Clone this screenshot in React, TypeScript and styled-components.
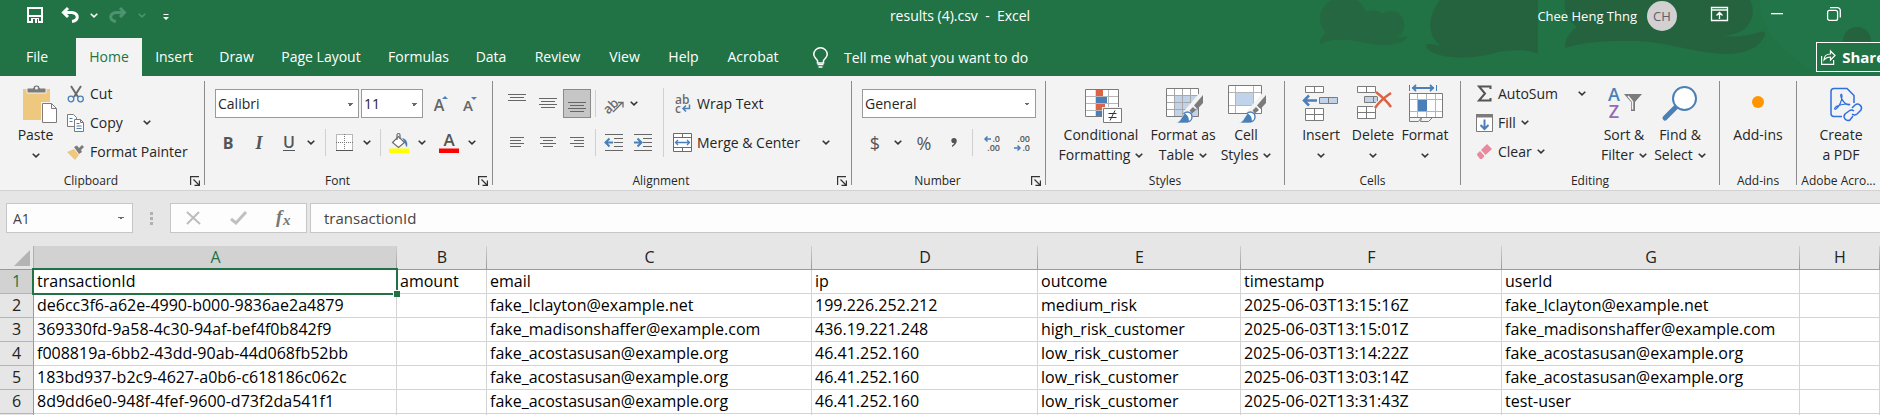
import React from "react";
import styled, { createGlobalStyle, css } from "styled-components";

const uiFont = `"Open Sans", "Noto Sans", sans-serif`;
const cellFont = `"Open Sans", "Noto Sans", sans-serif`;
const green = "#217346";
const blue = "#4a7fb8";
const gray = "#6b6b6b";

const GlobalStyle = createGlobalStyle`
  *, *::before, *::after { box-sizing: border-box; }
  body { margin: 0; background: #e6e6e6; font-family: ${uiFont}; color: #262626; }
  button, input, select { font: inherit; color: inherit; margin: 0; }
  svg { display: block; flex: none; overflow: visible; }
`;

const Page = styled.div`
  height: 100vh;
  display: flex;
  flex-direction: column;
  overflow: hidden;
`;

/* ---------- title bar and tabs ---------- */

const Header = styled.header`
  position: relative;
  flex: none;
  background: ${green};
  color: #fff;
  overflow: hidden;
`;

const Backdrop = styled.svg`
  position: absolute;
  top: 0;
  right: 0;
`;

const TitleBar = styled.div`
  position: relative;
  display: grid;
  grid-template-columns: 40px minmax(0, 1fr) auto minmax(0, 1fr);
  align-items: start;
  height: 38px;
`;

const QuickAccess = styled.div`
  grid-column: 1 / 3;
  display: flex;
  padding-left: 20px;
`;

const BarButton = styled.button<{ $w: number; $h?: number }>`
  width: ${(p) => p.$w}px;
  height: ${(p) => p.$h ?? 30}px;
  display: flex;
  align-items: center;
  justify-content: center;
  flex: none;
  padding: 0;
  border: 0;
  background: none;
  &:disabled { color: #4f9270; }
`;

const DocTitle = styled.h1`
  margin: 0;
  font-size: 14px;
  font-weight: 400;
  line-height: 32px;
  white-space: pre;
`;

const TitleRight = styled.div`
  display: flex;
  justify-content: flex-end;
  padding-right: 26px;
`;

const Account = styled.button`
  display: flex;
  align-items: center;
  gap: 10px;
  height: 32px;
  margin-right: 21px;
  padding: 0;
  border: 0;
  background: none;
  font-size: 13px;
  white-space: nowrap;
`;

const Avatar = styled.span`
  width: 30px;
  height: 30px;
  border-radius: 50%;
  background: #d2d0d0;
  color: #5f5f68;
  font-size: 13px;
  line-height: 30px;
  text-align: center;
`;

const TabRow = styled.nav`
  position: relative;
  display: flex;
  height: 38px;
`;

const Tab = styled.button<{ $w: number; $active?: boolean }>`
  width: ${(p) => p.$w}px;
  flex: none;
  padding: 0;
  border: 0;
  background: none;
  font-size: 14px;
  line-height: 38px;
  white-space: nowrap;
  ${(p) => p.$active && css`
    background: #f3f3f3;
    color: ${green};
  `}
`;

const FileTab = styled(Tab)`
  padding-right: 2px;
`;

const TellMe = styled.button`
  display: flex;
  align-items: center;
  gap: 16px;
  padding: 0 20px;
  border: 0;
  background: none;
  font-size: 14px;
  white-space: nowrap;
`;

const ShareButton = styled.button`
  display: flex;
  align-items: center;
  gap: 6px;
  height: 30px;
  margin: 4px -14px 0 auto;
  padding: 0 8px 0 4px;
  border: 1px solid #fff;
  background: ${green};
  font-size: 15px;
  font-weight: 700;
`;

/* ---------- ribbon ---------- */

const Ribbon = styled.div`
  display: flex;
  flex: none;
  height: 115px;
  padding-top: 3px;
  background: #f3f3f3;
  border-bottom: 1px solid #d2d2d2;
  overflow: hidden;
`;

const Group = styled.section<{ $w: number }>`
  width: ${(p) => p.$w}px;
  flex: none;
  display: flex;
  flex-direction: column;
`;

const LastGroup = styled.section`
  flex: 1;
  min-width: 83px;
  display: flex;
  flex-direction: column;
`;

const Divider = styled.div`
  width: 1px;
  height: 104px;
  margin-top: 2px;
  flex: none;
  background: #8c8c8c;
`;

const GroupBody = styled.div<{ $left?: number }>`
  display: flex;
  height: 94px;
  padding-left: ${(p) => p.$left ?? 0}px;
`;

const GroupFooter = styled.div`
  display: flex;
  align-items: center;
  height: 16px;
`;

const GroupName = styled.span`
  flex: 1;
  font-size: 12px;
  line-height: 16px;
  text-align: center;
  white-space: nowrap;
`;

const Launcher = styled.button`
  width: 22px;
  height: 16px;
  padding: 0 0 0 8px;
  border: 0;
  background: none;
`;

const BigButton = styled.button<{ $w: number }>`
  width: ${(p) => p.$w}px;
  flex: none;
  display: flex;
  flex-direction: column;
  align-items: center;
  padding: 6px 0 0;
  border: 0;
  background: none;
  font-size: 14px;
  line-height: 20px;
  white-space: nowrap;
`;

const BigIcon = styled.svg.attrs({ width: 40, height: 40, viewBox: "0 0 40 40", fill: "none" })``;

const BigLine = styled.span`
  display: flex;
  align-items: center;
  justify-content: center;
  gap: 5px;
  height: 20px;
`;

const SmallStack = styled.div<{ $w?: number }>`
  display: flex;
  flex-direction: column;
  flex: none;
  width: ${(p) => (p.$w ? `${p.$w}px` : "auto")};
`;

const SmallRow = styled.div`
  display: flex;
  align-items: center;
  height: 29px;
`;

const SmallButton = styled.button`
  display: flex;
  align-items: center;
  gap: 5px;
  height: 28px;
  padding: 0 0 0 4px;
  border: 0;
  background: none;
  font-size: 14px;
  white-space: nowrap;
`;

const ToolRows = styled.div`
  display: flex;
  flex-direction: column;
  gap: 10px;
  padding-top: 10px;
`;

const ToolRow = styled.div`
  display: flex;
  align-items: center;
  height: 29px;
`;

const Tool = styled.button<{ $w: number; $on?: boolean }>`
  width: ${(p) => p.$w}px;
  height: 29px;
  flex: none;
  display: flex;
  align-items: center;
  justify-content: center;
  padding: 0;
  border: ${(p) => (p.$on ? "1px solid #8a8a8a" : "0")};
  background: ${(p) => (p.$on ? "#c6c6c6" : "none")};
  font-size: 16px;
  line-height: 20px;
  color: #555;
`;

const Glyph = styled.span<{ $kind: "bold" | "italic" | "underline" | "symbol" }>`
  ${(p) => p.$kind === "bold" && css`font-weight: 700;`}
  ${(p) => p.$kind === "italic" && css`font-family: "Liberation Serif", serif; font-size: 18px; font-style: italic; font-weight: 700;`}
  ${(p) => p.$kind === "underline" && css`font-weight: 600; border-bottom: 1px solid #555; line-height: 16px;`}
  ${(p) => p.$kind === "symbol" && css`font-size: 18px;`}
`;

const Rule = styled.div<{ $h?: number; $gap?: number }>`
  width: 1px;
  height: ${(p) => p.$h ?? 27}px;
  margin: 0 ${(p) => p.$gap ?? 4}px;
  flex: none;
  background: #d0d0d0;
`;

const TallRule = styled(Rule)`
  margin-top: 9px;
`;

const caret = css`
  appearance: none;
  background-image: linear-gradient(45deg, transparent 50%, #6b6b6b 50%), linear-gradient(-45deg, transparent 50%, #6b6b6b 50%);
  background-image: linear-gradient(to bottom left, #6b6b6b 50%, transparent 50%), linear-gradient(to bottom right, #6b6b6b 50%, transparent 50%);
  background-size: 3px 3px;
  background-repeat: no-repeat;
`;

const Combo = styled.select<{ $w: number }>`
  ${caret}
  width: ${(p) => p.$w}px;
  height: 29px;
  padding: 0 20px 0 2px;
  border: 1px solid #9a9a9a;
  border-radius: 0;
  background-color: #fff;
  background-position: right 8px top 13px, right 5px top 13px;
  font-size: 14px;
  flex: none;
`;

const SizeCombo = styled(Combo)`
  margin-left: 2px;
`;

/* ---------- formula bar ---------- */

const FormulaBar = styled.div`
  display: flex;
  flex: none;
  height: 55px;
  padding: 12px 0 12px 6px;
`;

const NameBox = styled.select`
  ${caret}
  width: 127px;
  height: 30px;
  padding: 0 24px 0 6px;
  border: 1px solid #c6c6c6;
  border-radius: 0;
  background-color: #fdfdfd;
  background-image: linear-gradient(to top right, transparent 50%, #6b6b6b 50%), linear-gradient(to top left, transparent 50%, #6b6b6b 50%);
  background-position: right 11px top 13px, right 8px top 13px;
  font-size: 14px;
  color: #444;
`;

const Grip = styled.div`
  width: 37px;
  height: 30px;
  display: flex;
  flex-direction: column;
  align-items: center;
  justify-content: center;
  gap: 2px;
`;

const GripDot = styled.span`
  width: 3px;
  height: 3px;
  background: #b0b0b0;
`;

const FormulaTools = styled.div`
  display: flex;
  justify-content: space-around;
  width: 137px;
  height: 30px;
  margin-right: 3px;
  border: 1px solid #c6c6c6;
  background: #fdfdfd;
`;

const FormulaInput = styled.input`
  flex: 1;
  min-width: 0;
  height: 30px;
  padding: 0 13px;
  border: 1px solid #c6c6c6;
  border-right: 0;
  border-radius: 0;
  background: #fdfdfd;
  font-size: 15px;
  color: #444;
`;

/* ---------- worksheet ---------- */

const Sheet = styled.table`
  table-layout: fixed;
  width: 100%;
  min-width: 1880px;
  border-collapse: separate;
  border-spacing: 0;
  background: #fff;
  font-family: ${cellFont};
  font-size: 16px;
  color: #000;
`;

const Col = styled.col<{ $w?: number }>`
  width: ${(p) => (p.$w ? `${p.$w}px` : "auto")};
`;

const ColHead = styled.th<{ $on?: boolean }>`
  height: 24px;
  padding: 0;
  font-weight: 400;
  line-height: 23px;
  border-bottom: 1px solid #999;
  background: linear-gradient(#d0d0d0, #999) right / 1px 100% no-repeat ${(p) => (p.$on ? "#d2d2d2" : "#e6e6e6")};
  color: ${(p) => (p.$on ? green : "#222")};
`;

const Corner = styled.td`
  padding: 0 3px 3px 14px;
  border-right: 1px solid #b0b0b0;
  border-bottom: 1px solid #999;
  background: #e6e6e6;
  vertical-align: bottom;
`;

const RowHead = styled.th<{ $on?: boolean }>`
  height: 24px;
  padding: 0;
  font-weight: 400;
  line-height: 23px;
  border-right: 1px solid #999;
  border-bottom: 1px solid #b5b5b5;
  background: ${(p) => (p.$on ? "#d2d2d2" : "#e6e6e6")};
  color: ${(p) => (p.$on ? green : "#222")};
`;

const Cell = styled.td<{ $selected?: boolean }>`
  position: relative;
  height: 24px;
  padding: 0 0 0 3px;
  line-height: 23px;
  white-space: nowrap;
  border-right: 1px solid #d4d4d4;
  border-bottom: 1px solid #d4d4d4;
  ${(p) => p.$selected && css`
    z-index: 1;
    &::before {
      content: "";
      position: absolute;
      inset: -2px;
      border: 2px solid ${green};
    }
    &::after {
      content: "";
      position: absolute;
      right: -4px;
      bottom: -4px;
      width: 7px;
      height: 7px;
      background: ${green};
      border: solid #fff;
      border-width: 1px 0 0 1px;
    }
  `}
`;

/* ---------- icons ---------- */

const Chevron = ({ color = "#333" }: { color?: string }) => (
  <svg width="8" height="5" viewBox="0 0 8 5" fill="none" stroke={color} strokeWidth="1.5">
    <path d="M.7.7 4 3.9 7.3.7" />
  </svg>
);

const LaunchIcon = () => (
  <svg width="11" height="11" viewBox="0 0 11 11" fill="none" stroke="#333" strokeWidth="1.2">
    <path d="M.6 9V.6H9M3.5 3.5 9 9M9.4 4.5v4.9H4.5" />
  </svg>
);

const lineSets: Record<string, number[][]> = {
  top: [[0, 18, 0], [2, 16, 3], [0, 18, 6]],
  middle: [[0, 18, 0], [2, 16, 3], [0, 18, 6], [2, 16, 9]],
  bottom: [[0, 18, 0], [2, 16, 3], [0, 18, 6], [2, 16, 9]],
  left: [[0, 14, 0], [0, 11, 3], [0, 14, 6], [0, 11, 9]],
  center: [[0, 16, 0], [3, 13, 3], [0, 16, 6], [3, 13, 9]],
  right: [[0, 14, 0], [4, 14, 3], [0, 14, 6], [4, 14, 9]],
};

const LinesIcon = ({ kind }: { kind: string }) => {
  const lines = lineSets[kind];
  const width = Math.max(...lines.map((l) => l[1]));
  const shift = kind === "top" ? -4 : kind === "bottom" ? 4 : 0;
  return (
    <svg width={width} height="11" viewBox={`0 0 ${width} 11`} stroke="#666" strokeWidth="1">
      {lines.map(([a, b, y]) => (
        <path key={y} d={`M${a} ${y + 0.5 + shift}H${b}`} />
      ))}
    </svg>
  );
};

const IndentIcon = ({ out }: { out?: boolean }) => (
  <svg width="18" height="17" viewBox="0 0 18 17" fill="none" stroke="#666">
    <path d="M0 .5h18M9 4.5h9M9 8.5h9M9 12.5h9M0 16.5h18" />
    <path d={out ? "M8 8.5H1.5M4.5 4.5l-4 4 4 4" : "M0 8.5h6.5M3.5 4.5l4 4-4 4"} stroke={blue} strokeWidth="2" />
  </svg>
);

const Brush = () => (
  <g>
    <path d="M40 10 31 20.500 34.500 24 40 18z" fill="#7b7b7b" />
    <path d="M30 22l3 3-4 3.500-2.500-3z" fill="#7b7b7b" />
    <path d="M13 38c6-1 5-10 12-10 7 1 5 10-2 10z" fill={blue} stroke="#f3f3f3" strokeWidth=".6" />
    <path d="M21 28.500c3-3 8-1 8 3 0 3-2 5-4 5 1-4-1-6-4-8z" fill="#fff" stroke={blue} strokeWidth="1.300" />
  </g>
);

const PasteIcon = () => (
  <BigIcon>
    <path d="M7 4h27v31H7z" fill="#edc87e" />
    <path d="M11 8V3h6c0-4 7-4 7 0h6v5z" fill="#7b7b7b" stroke="#f3f3f3" />
    <circle cx="20.500" cy="3" r="1.500" fill="#f3f3f3" />
    <path d="M26.500 18.500h9l5 5v14h-14z" fill="#fff" stroke="#f3f3f3" strokeWidth="3" />
    <path d="M26.500 18.500h9l5 5v14h-14zM35.500 18.500v5h5" fill="#fff" stroke="#7b7b7b" />
  </BigIcon>
);

const ConditionalIcon = () => (
  <BigIcon>
    <path d="M4.500 4.500h33v27h-33z" fill="#fff" />
    <path d="M15 11.500h12.500M4.500 11.500h33M4.500 18.500h33M4.500 25.500h33M15 4.500v27M27.500 4.500v27" stroke="#b5b5b5" />
    <path d="M15 5h7v6h-7zM15 19h9v6h-9z" fill="#dc6344" />
    <path d="M15 12h11v6H15zM15 26h7v6h-7z" fill={blue} />
    <path d="M4.500 4.500h33v27h-33z" stroke="#7b7b7b" />
    <path d="M22.500 23.500h18v14h-18z" fill="#fff" stroke="#f3f3f3" strokeWidth="3" />
    <path d="M22.500 23.500h18v14h-18z" fill="#fff" stroke="#7b7b7b" />
    <path d="M27.500 28.500h8M27.500 32.500h8M34 25.500l-5 10" stroke="#333" />
  </BigIcon>
);

const FormatTableIcon = () => (
  <BigIcon>
    <path d="M3.500 3.500h32v28h-32z" fill="#fff" />
    <path d="M11.500 10.500h24v21h-24z" fill="#c0d3ea" />
    <path d="M3.500 10.500h32M3.500 17.500h32M3.500 24.500h32M11.500 3.500v28M19.500 3.500v28M27.500 3.500v28" stroke="#a8a8a8" />
    <path d="M3.500 3.500h32v28h-32z" stroke="#7b7b7b" />
    <path d="M41 8 23 29" stroke="#f3f3f3" strokeWidth="7" />
    <Brush />
  </BigIcon>
);

const CellStylesIcon = () => (
  <BigIcon>
    <path d="M2.500.5h33v28h-33z" fill="#fff" />
    <path d="M10 8h17v12H10z" fill="#c0d3ea" />
    <path d="M2.500 7.500h33M2.500 20.500h33M9.500.5v28M27.500.5v28" stroke="#b5b5b5" />
    <path d="M2.500.5h33v28h-33z" stroke="#7b7b7b" />
    <path d="M41 8 23 29" stroke="#f3f3f3" strokeWidth="7" />
    <Brush />
  </BigIcon>
);

const InsertIcon = () => (
  <BigIcon>
    <path d="M4.500 1.500h18v6h-18zM13.500 1.500v6M4.500 23.500h18v12h-18zM13.500 23.500v12M4.500 29.500h18" fill="#fff" stroke="#7b7b7b" />
    <path d="M18.500 12.500h18v6h-18zM27.500 12.500v6" fill="#c0d3ea" stroke="#7b7b7b" />
    <path d="M16 15.500H3M8 10.500l-5 5 5 5" stroke={blue} strokeWidth="2.500" />
  </BigIcon>
);

const DeleteIcon = () => (
  <BigIcon>
    <path d="M4.500 1.500h18v6h-18zM13.500 1.500v6M4.500 21.500h18v12h-18zM13.500 21.500v12M4.500 27.500h18" fill="#fff" stroke="#7b7b7b" />
    <path d="M11.500 11.500h13v6h-13zM20.500 11.500v6" fill="#c0d3ea" stroke="#7b7b7b" />
    <path d="M23 7c5 4 11 9 15 15M38 8c-6 4-12 9-16 15" stroke="#f3f3f3" strokeWidth="5" />
    <path d="M23 7c5 4 11 9 15 15M38 8c-6 4-12 9-16 15" stroke="#dc6344" strokeWidth="2.500" />
  </BigIcon>
);

const FormatIcon = () => (
  <BigIcon>
    <path d="M4.500 0v6M31.500 0v6" stroke={blue} />
    <path d="M7 3h22M11 0 8 3l3 3M25 0l3 3-3 3" stroke={blue} strokeWidth="1.800" />
    <path d="M4.500 8.500h33v24h-33z" fill="#fff" />
    <path d="M4.500 14.500h33M4.500 26.500h33M12.500 8.500v24M21.500 8.500v24M30.500 8.500v24" stroke="#b5b5b5" />
    <path d="M13 15h9v11h-9z" fill={blue} />
    <path d="M4.500 8.500h33v24h-33zM4.500 32.500v4h9l3-4M16.500 32.500l-1 4h8l4-4" stroke="#7b7b7b" />
  </BigIcon>
);

const SortIcon = () => (
  <BigIcon fontFamily={uiFont} fontSize="18" fontWeight="600">
    <text x="10" y="16" fill={blue} textAnchor="middle">A</text>
    <text x="10" y="33" fill="#9668b8" textAnchor="middle">Z</text>
    <path d="M20 9h18l-7 8v9h-4v-9z" fill="#7b7b7b" />
    <path d="M24 11l4.500 5.500v8" stroke="#f3f3f3" strokeWidth="1.500" />
  </BigIcon>
);

const FindIcon = () => (
  <BigIcon>
    <path d="M5 33 16 22" stroke={blue} strokeWidth="5" strokeLinecap="round" />
    <circle cx="24.500" cy="13.500" r="11.500" fill="#fff" stroke={blue} strokeWidth="2" />
  </BigIcon>
);

const PdfIcon = () => (
  <BigIcon stroke="#2f6fe0" strokeWidth="1.500">
    <path d="M21 31.500H13a3 3 0 0 1-3-3V6.500a3 3 0 0 1 3-3h13l7 7V18" />
    <path d="M15 24c3-2 6-8 6-13 0-3-2-2-1 1 1 4 5 8 8 8 3-1-4-2-12 1-3 2-3 4-1 3z" strokeWidth="1.200" />
    <path d="m31 23 3-3a4 4 0 0 1 6 5l-4 4a4 4 0 0 1-5 0M32 31l-3 4a4 4 0 0 1-5-6l4-3a4 4 0 0 1 5 0" />
  </BigIcon>
);

const CutIcon = () => (
  <svg width="18" height="18" viewBox="0 0 18 18" fill="none">
    <path d="M4 1l7 11M14 1 7 12" stroke={gray} strokeWidth="2" />
    <circle cx="4" cy="14" r="2.800" stroke={blue} strokeWidth="1.300" />
    <circle cx="13.500" cy="14" r="2.800" stroke={blue} strokeWidth="1.300" />
  </svg>
);

const CopyIcon = () => (
  <svg width="18" height="18" viewBox="0 0 18 18" fill="#fff" stroke="#7b7b7b">
    <path d="M.5.500h6l3 3v9h-9z" />
    <path d="M7.500 5.500h6l3 3v9h-9zM13.500 5.500v3h3" />
    <path d="M2.500 4.500h3M2.500 7.500h3M9.500 9.500h3M9.500 12h5M9.500 14.500h5" stroke={blue} />
  </svg>
);

const PainterIcon = () => (
  <svg width="18" height="16" viewBox="0 0 18 16">
    <path d="M0 8 7 5l5 6-4 5z" fill="#edc87e" />
    <path d="M7 3l3-1.500L12 4l3-3 2 2-3 3 1 2-3 2z" fill="#7b7b7b" />
  </svg>
);

const BorderIcon = () => (
  <svg width="17" height="17" viewBox="0 0 17 17" stroke="#777" fill="#fff">
    <path d="M.5.500h16v16H.500z" strokeDasharray="1 1" />
    <path d="M8.500 0v17M0 8.500h17" strokeDasharray="1 1" />
    <path d="M0 16.500h17" stroke="#555" />
  </svg>
);

const FillIcon = () => (
  <svg width="20" height="20" viewBox="0 0 20 20" fill="none">
    <path d="M3.500 9.500 9.500 3.500l6 6-6 5z" fill="#fff" stroke={gray} strokeWidth="1.200" />
    <path d="M8 7V2c0-2 3-2 3 0v4" stroke={gray} strokeWidth="1.200" />
    <path d="M13 5c5 1 6 5 5 9-2-1-1-4-5-9z" fill={blue} />
    <path d="M0 15.500h20V20H0z" fill="#ff0" />
  </svg>
);

const FontColorIcon = () => (
  <svg width="20" height="20" viewBox="0 0 20 20">
    <text x="10" y="13" fontFamily={uiFont} fontSize="17" fontWeight="600" fill="#555" textAnchor="middle">A</text>
    <path d="M0 15.500h20V20H0z" fill="#f00" />
  </svg>
);

const FontSizeIcon = ({ grow }: { grow?: boolean }) => (
  <svg width="16" height="18" viewBox="0 0 16 18">
    <text x="6" y="16" fontFamily={uiFont} fontSize={grow ? 16 : 15} fontWeight="600" fill="#666" textAnchor="middle">A</text>
    <path d={grow ? "M9 4h6l-3-3z" : "M9 2h6l-3 3z"} fill={blue} />
  </svg>
);

const OrientationIcon = () => (
  <svg width="19" height="18" viewBox="0 0 19 18" fill="none" stroke={gray} strokeWidth="1.300">
    <text x="-2" y="17" transform="rotate(-45 4 12)" fontFamily={uiFont} fontSize="13" fontWeight="600" fill={gray} stroke="none">ab</text>
    <path d="M8 17 17.500 7.500M13 7.500h5v5" />
  </svg>
);

const WrapIcon = () => (
  <svg width="19" height="20" viewBox="0 0 19 20" fill="none">
    <g fontFamily={uiFont} fontSize="12" fontWeight="600" fill={gray}>
      <text x="2" y="10">ab</text>
      <text x="2" y="19">c</text>
    </g>
    <path d="M16.500 10.500v4H10M13 11.500l-3 3 3 3" stroke={blue} strokeWidth="1.500" />
  </svg>
);

const MergeIcon = () => (
  <svg width="19" height="19" viewBox="0 0 19 19" fill="#fff" stroke={gray}>
    <path d="M.5.500h18v18H.500zM.500 4.500h18M.500 14.500h18M9.500.500v4M9.500 14.500v4" />
    <path d="M2.500 9.500h14M5 7 2.500 9.500 5 12M14 7l2.500 2.500L14 12" fill="none" stroke={blue} strokeWidth="1.300" />
  </svg>
);

const DecimalIcon = ({ more }: { more?: boolean }) => (
  <svg width="16" height="18" viewBox="0 0 16 18" fill="none">
    <g fontFamily={uiFont} fontSize="9" fontWeight="600" fill="#555" textAnchor="end">
      <text x="16" y="8">{more ? ".0" : ".00"}</text>
      <text x="16" y="17">{more ? ".00" : ".0"}</text>
    </g>
    <path d={more ? "M7 5H1M3.500 2.500 1 5l2.500 2.500" : "M0 14h6M3.500 11.500 6 14l-2.500 2.500"} stroke={blue} strokeWidth="1.500" />
  </svg>
);

const SigmaIcon = () => (
  <svg width="17" height="17" viewBox="0 0 17 17" fill="none" stroke="#555" strokeWidth="2">
    <path d="M14.500 4V1.500H3L9 8.500 3 15.500h11.500V13" />
  </svg>
);

const FillDownIcon = () => (
  <svg width="17" height="18" viewBox="0 0 17 18" fill="none">
    <path d="M.5.500h16v17H.500z" fill="#fff" stroke="#7b7b7b" />
    <path d="M0 0h17v3.500H0z" fill="#7b7b7b" />
    <path d="M8.500 5.500v9M4.500 11l4 4 4-4" stroke={blue} strokeWidth="2" />
  </svg>
);

const EraserIcon = () => (
  <svg width="17" height="17" viewBox="0 0 17 17">
    <path d="M11 1 16 6 9.500 12 5 7z" fill="#e88a9c" />
    <path d="m4 8 4.500 5L6 16H4L1 12v-1z" fill="#e88a9c" />
  </svg>
);

/* ---------- data ---------- */

const tabs: [string, number][] = [
  ["Insert", 64],
  ["Draw", 61],
  ["Page Layout", 108],
  ["Formulas", 87],
  ["Data", 58],
  ["Review", 75],
  ["View", 59],
  ["Help", 59],
  ["Acrobat", 80],
];

const columns: [string, number?][] = [
  ["A", 363],
  ["B", 90],
  ["C", 325],
  ["D", 226],
  ["E", 203],
  ["F", 261],
  ["G", 298],
  ["H"],
];

const rows: string[][] = [
  ["transactionId", "amount", "email", "ip", "outcome", "timestamp", "userId", ""],
  ["de6cc3f6-a62e-4990-b000-9836ae2a4879", "", "fake_lclayton@example.net", "199.226.252.212", "medium_risk", "2025-06-03T13:15:16Z", "fake_lclayton@example.net", ""],
  ["369330fd-9a58-4c30-94af-bef4f0b842f9", "", "fake_madisonshaffer@example.com", "436.19.221.248", "high_risk_customer", "2025-06-03T13:15:01Z", "fake_madisonshaffer@example.com", ""],
  ["f008819a-6bb2-43dd-90ab-44d068fb52bb", "", "fake_acostasusan@example.org", "46.41.252.160", "low_risk_customer", "2025-06-03T13:14:22Z", "fake_acostasusan@example.org", ""],
  ["183bd937-b2c9-4627-a0b6-c618186c062c", "", "fake_acostasusan@example.org", "46.41.252.160", "low_risk_customer", "2025-06-03T13:03:14Z", "fake_acostasusan@example.org", ""],
  ["8d9dd6e0-948f-4fef-9600-d73f2da541f1", "", "fake_acostasusan@example.org", "46.41.252.160", "low_risk_customer", "2025-06-02T13:31:43Z", "test-user", ""],
];

/* ---------- parts ---------- */

const Footer = ({ name, launcher }: { name: string; launcher?: boolean }) => (
  <GroupFooter>
    <GroupName>{name}</GroupName>
    {launcher && (
      <Launcher aria-label={`${name} settings`}>
        <LaunchIcon />
      </Launcher>
    )}
  </GroupFooter>
);

const Big = ({ w, icon, first, second, menu }: { w: number; icon: React.ReactNode; first: string; second?: string; menu?: boolean }) => (
  <BigButton $w={w}>
    {icon}
    <BigLine>{first}</BigLine>
    <BigLine>
      {second}
      {menu && <Chevron />}
    </BigLine>
  </BigButton>
);

const TitleArea = () => (
  <Header>
    <Backdrop width="610" height="76" viewBox="1270 0 610 76" fill="#25633f" aria-hidden="true">
      <path d="M1760 0h120v76h-60c-30-20-60-40-60-76z" fill="#227849" opacity=".5" />
      <path d="M1332 0h24c7 4 8 8 10 12 8-3 12-2 16 2 14-8 24 2 22 14-1 6-4 8-8 9 4 1 8 0 12-1-4 8-20 11-36 8-20-4-36-8-52 0 0-5 2-9 6-11-9-10-8-25 6-33z" opacity=".75" />
      <path d="M1440 0h98v54c-10-5-24-4-40-2-20 7-54 8-68-1-5-4-6-7 0-7 4 0 7 1 10 2-14-13-12-30 0-46z" />
      <path d="M1565 48c0-9 4-16 12-21-10-7-14-17-12-27h185c4 8 5 18-4 28-6 5-14 7-22 8 16 2 28-2 36-4 6-2 6 2 3 7-8 13-28 17-50 14-30-3-50-13-90-12-25 0-42 2-58 7z" />
      <circle cx="1857" cy="41" r="14" />
    </Backdrop>
    <TitleBar>
      <QuickAccess>
        <BarButton $w={30} aria-label="Save">
          <svg width="16" height="16" viewBox="0 0 16 16" fill="none" stroke="#fff" strokeWidth="2">
            <path d="M1 1h14v14H1zM2 9h12" />
            <path d="M4 11h8v5H4z" fill="#fff" stroke="none" />
            <path d="M6 12h2v4H6zM10 12h1v4h-1z" fill={green} stroke="none" />
          </svg>
        </BarButton>
        <BarButton $w={40} aria-label="Undo">
          <svg width="18" height="16" viewBox="0 0 18 16" fill="none" stroke="#fff" strokeWidth="3">
            <path d="M7 1 2.500 5.500 7 10M3 5.500h8c7 1 7 8 0 9" />
          </svg>
        </BarButton>
        <BarButton $w={8} aria-label="Undo history"><Chevron color="#fff" /></BarButton>
        <BarButton $w={40} disabled aria-label="Redo">
          <svg width="18" height="16" viewBox="0 0 18 16" fill="none" stroke="currentColor" strokeWidth="3">
            <path d="m11 1 4.500 4.500L11 10M15 5.500H7c-7 1-7 8 0 9" />
          </svg>
        </BarButton>
        <BarButton $w={8} disabled aria-label="Redo history"><Chevron color="currentColor" /></BarButton>
        <BarButton $w={40} $h={34} aria-label="Customize quick access">
          <svg width="6" height="6" viewBox="0 0 6 6" fill="#fff">
            <path d="M.5 0h5v1h-5zM0 3h6L3 6z" />
          </svg>
        </BarButton>
      </QuickAccess>
      <DocTitle>{"results (4).csv  -  Excel"}</DocTitle>
      <TitleRight>
        <Account>
          Chee Heng Thng
          <Avatar>CH</Avatar>
        </Account>
        <BarButton $w={42} $h={28} aria-label="Ribbon display options">
          <svg width="17" height="14" viewBox="0 0 17 14" fill="none" stroke="#fff">
            <path d="M.5.500h16v13H.500zM.500 3h16M8.500 12V5.500M5.500 8.500l3-3 3 3" strokeWidth="1.300" />
          </svg>
        </BarButton>
        <BarButton $w={73} $h={28} aria-label="Minimize">
          <svg width="12" height="2" viewBox="0 0 12 2"><path d="M0 0h12v1.300H0z" fill="#fff" /></svg>
        </BarButton>
        <BarButton $w={41} $h={28} aria-label="Restore">
          <svg width="14" height="14" viewBox="0 0 14 14" fill="none" stroke="#fff" strokeWidth="1.300">
            <rect x=".6" y="3.400" width="10" height="10" rx="2" />
            <path d="M3 .7h7a3 3 0 0 1 3.300 3.300v6.500" />
          </svg>
        </BarButton>
      </TitleRight>
    </TitleBar>
    <TabRow>
      <FileTab $w={76}>File</FileTab>
      <Tab $w={66} $active>Home</Tab>
      {tabs.map(([name, w]) => (
        <Tab key={name} $w={w}>{name}</Tab>
      ))}
      <TellMe>
        <svg width="15" height="21" viewBox="0 0 15 21" fill="none" stroke="#fff" strokeWidth="1.500">
          <path d="M4.500 16v-2.500C2 11 .8 9.500.8 7.300a6.700 6.500 0 0 1 13.400 0c0 2.200-1.200 3.700-3.700 6.200V16z" />
          <path d="M4.500 17.500h6M5.500 20h4" />
        </svg>
        Tell me what you want to do
      </TellMe>
      <ShareButton>
        <svg width="15" height="15" viewBox="0 0 15 15" fill="none" stroke="#fff" strokeWidth="1.200">
          <path d="M.6 6v8.400h12V10M3 10c0-4 3-6 6.500-6V1L14 5.500 9.500 10V7C6 7 4.500 8 3 10z" />
        </svg>
        Share
      </ShareButton>
    </TabRow>
  </Header>
);

const RibbonArea = () => (
  <Ribbon>
    <Group $w={204}>
      <GroupBody $left={8}>
        <Big w={55} icon={<PasteIcon />} first="Paste" menu />
        <SmallStack>
          <SmallRow><SmallButton><CutIcon />Cut</SmallButton></SmallRow>
          <SmallRow>
            <SmallButton><CopyIcon />Copy</SmallButton>
            <Tool $w={48} aria-label="Copy options"><Chevron /></Tool>
          </SmallRow>
          <SmallRow><SmallButton><PainterIcon />Format Painter</SmallButton></SmallRow>
        </SmallStack>
      </GroupBody>
      <Footer name="Clipboard" launcher />
    </Group>
    <Divider />
    <Group $w={287}>
      <GroupBody $left={10}>
        <ToolRows>
          <ToolRow>
            <Combo $w={144} aria-label="Font"><option>Calibri</option></Combo>
            <SizeCombo $w={62} aria-label="Font size"><option>11</option></SizeCombo>
            <Tool $w={36} aria-label="Increase font size"><FontSizeIcon grow /></Tool>
            <Tool $w={22} aria-label="Decrease font size"><FontSizeIcon /></Tool>
          </ToolRow>
          <ToolRow>
            <Tool $w={26} aria-label="Bold"><Glyph $kind="bold">B</Glyph></Tool>
            <Tool $w={36} aria-label="Italic"><Glyph $kind="italic">I</Glyph></Tool>
            <Tool $w={24} aria-label="Underline"><Glyph $kind="underline">U</Glyph></Tool>
            <Tool $w={20} aria-label="Underline style"><Chevron /></Tool>
            <Rule />
            <Tool $w={28} aria-label="Borders"><BorderIcon /></Tool>
            <Tool $w={18} aria-label="Border style"><Chevron /></Tool>
            <Rule />
            <Tool $w={28} aria-label="Fill color"><FillIcon /></Tool>
            <Tool $w={18} aria-label="Fill color options"><Chevron /></Tool>
            <Tool $w={36} aria-label="Font color"><FontColorIcon /></Tool>
            <Tool $w={10} aria-label="Font color options"><Chevron /></Tool>
          </ToolRow>
        </ToolRows>
      </GroupBody>
      <Footer name="Font" launcher />
    </Group>
    <Divider />
    <Group $w={358}>
      <GroupBody $left={9}>
        <ToolRows>
          <ToolRow>
            <Tool $w={30} aria-label="Top align"><LinesIcon kind="top" /></Tool>
            <Tool $w={31} aria-label="Middle align"><LinesIcon kind="middle" /></Tool>
            <Tool $w={28} $on aria-label="Bottom align"><LinesIcon kind="bottom" /></Tool>
            <Rule />
            <Tool $w={28} aria-label="Orientation"><OrientationIcon /></Tool>
            <Tool $w={12} aria-label="Orientation options"><Chevron /></Tool>
          </ToolRow>
          <ToolRow>
            <Tool $w={30} aria-label="Align left"><LinesIcon kind="left" /></Tool>
            <Tool $w={31} aria-label="Align center"><LinesIcon kind="center" /></Tool>
            <Tool $w={28} aria-label="Align right"><LinesIcon kind="right" /></Tool>
            <Rule />
            <Tool $w={28} aria-label="Decrease indent"><IndentIcon out /></Tool>
            <Tool $w={30} aria-label="Increase indent"><IndentIcon /></Tool>
          </ToolRow>
        </ToolRows>
        <TallRule $h={69} $gap={5} />
        <ToolRows>
          <ToolRow><SmallButton><WrapIcon />Wrap Text</SmallButton></ToolRow>
          <ToolRow>
            <SmallButton><MergeIcon />Merge &amp; Center</SmallButton>
            <Tool $w={52} aria-label="Merge options"><Chevron /></Tool>
          </ToolRow>
        </ToolRows>
      </GroupBody>
      <Footer name="Alignment" launcher />
    </Group>
    <Divider />
    <Group $w={193}>
      <GroupBody $left={10}>
        <ToolRows>
          <ToolRow>
            <Combo $w={174} aria-label="Number format"><option>General</option></Combo>
          </ToolRow>
          <ToolRow>
            <Tool $w={26} aria-label="Currency"><Glyph $kind="symbol">$</Glyph></Tool>
            <Tool $w={20} aria-label="Currency options"><Chevron /></Tool>
            <Tool $w={32} aria-label="Percent"><Glyph $kind="symbol">%</Glyph></Tool>
            <Tool $w={28} aria-label="Comma">
              <svg width="6" height="9" viewBox="0 0 6 9" fill="#555"><path d="M3 0c4 0 4 6-2 9V7.500C3 6 3 5.500 3 5 0 6-1 0 3 0z" /></svg>
            </Tool>
            <Rule />
            <Tool $w={30} aria-label="Increase decimal"><DecimalIcon more /></Tool>
            <Tool $w={30} aria-label="Decrease decimal"><DecimalIcon /></Tool>
          </ToolRow>
        </ToolRows>
      </GroupBody>
      <Footer name="Number" launcher />
    </Group>
    <Divider />
    <Group $w={238}>
      <GroupBody $left={9}>
        <Big w={92} icon={<ConditionalIcon />} first="Conditional" second="Formatting" menu />
        <Big w={72} icon={<FormatTableIcon />} first="Format as" second="Table" menu />
        <Big w={54} icon={<CellStylesIcon />} first="Cell" second="Styles" menu />
      </GroupBody>
      <Footer name="Styles" />
    </Group>
    <Divider />
    <Group $w={175}>
      <GroupBody $left={10}>
        <Big w={52} icon={<InsertIcon />} first="Insert" menu />
        <Big w={52} icon={<DeleteIcon />} first="Delete" menu />
        <Big w={52} icon={<FormatIcon />} first="Format" menu />
      </GroupBody>
      <Footer name="Cells" />
    </Group>
    <Divider />
    <Group $w={258}>
      <GroupBody $left={11}>
        <SmallStack $w={124}>
          <SmallRow>
            <SmallButton><SigmaIcon />AutoSum</SmallButton>
            <Tool $w={48} aria-label="AutoSum options"><Chevron /></Tool>
          </SmallRow>
          <SmallRow><SmallButton><FillDownIcon />Fill<Chevron /></SmallButton></SmallRow>
          <SmallRow><SmallButton><EraserIcon />Clear<Chevron /></SmallButton></SmallRow>
        </SmallStack>
        <Big w={56} icon={<SortIcon />} first="Sort &amp;" second="Filter" menu />
        <Big w={56} icon={<FindIcon />} first="Find &amp;" second="Select" menu />
      </GroupBody>
      <Footer name="Editing" />
    </Group>
    <Divider />
    <Group $w={76}>
      <GroupBody>
        <Big w={76} icon={<BigIcon><circle cx="20" cy="17" r="6" fill="#ff9500" /></BigIcon>} first="Add-ins" />
      </GroupBody>
      <Footer name="Add-ins" />
    </Group>
    <Divider />
    <LastGroup>
      <GroupBody $left={4}>
        <Big w={80} icon={<PdfIcon />} first="Create" second="a PDF" />
      </GroupBody>
      <Footer name="Adobe Acro..." />
    </LastGroup>
  </Ribbon>
);

const FormulaArea = () => (
  <FormulaBar>
    <NameBox aria-label="Name box"><option>A1</option></NameBox>
    <Grip><GripDot /><GripDot /><GripDot /></Grip>
    <FormulaTools>
      <BarButton $w={40} $h={28} aria-label="Cancel">
        <svg width="15" height="14" viewBox="0 0 15 14" fill="none" stroke="#bdbdbd" strokeWidth="2"><path d="M1 1l13 12M13 1 1 13" /></svg>
      </BarButton>
      <BarButton $w={40} $h={28} aria-label="Enter">
        <svg width="17" height="14" viewBox="0 0 17 14" fill="none" stroke="#c0c0c0" strokeWidth="3"><path d="m1 8 5 4L16 1" /></svg>
      </BarButton>
      <BarButton $w={40} $h={28} aria-label="Insert function">
        <svg width="17" height="18" viewBox="0 0 17 18" fontFamily="Liberation Serif, serif" fontStyle="italic" fontWeight="700" fill="#777">
          <text x="1" y="14" fontSize="19">f</text>
          <text x="8" y="16" fontSize="15">x</text>
        </svg>
      </BarButton>
    </FormulaTools>
    <FormulaInput aria-label="Formula" defaultValue="transactionId" />
  </FormulaBar>
);

const Worksheet = () => (
  <Sheet>
    <colgroup>
      <Col $w={34} />
      {columns.map(([name, w]) => <Col key={name} $w={w} />)}
    </colgroup>
    <thead>
      <tr>
        <Corner>
          <svg width="16" height="16" viewBox="0 0 16 16"><path d="M16 0v16H0z" fill="#b4b4b4" /></svg>
        </Corner>
        {columns.map(([name]) => (
          <ColHead key={name} scope="col" $on={name === "A"}>{name}</ColHead>
        ))}
      </tr>
    </thead>
    <tbody>
      {rows.map((row, r) => (
        <tr key={r}>
          <RowHead scope="row" $on={r === 0}>{r + 1}</RowHead>
          {row.map((value, c) => (
            <Cell key={c} $selected={r === 0 && c === 0}>{value}</Cell>
          ))}
        </tr>
      ))}
      <tr>
        <RowHead />
        {columns.map(([name]) => <Cell key={name} />)}
      </tr>
    </tbody>
  </Sheet>
);

export default function App() {
  return (
    <Page>
      <GlobalStyle />
      <TitleArea />
      <RibbonArea />
      <FormulaArea />
      <Worksheet />
    </Page>
  );
}
